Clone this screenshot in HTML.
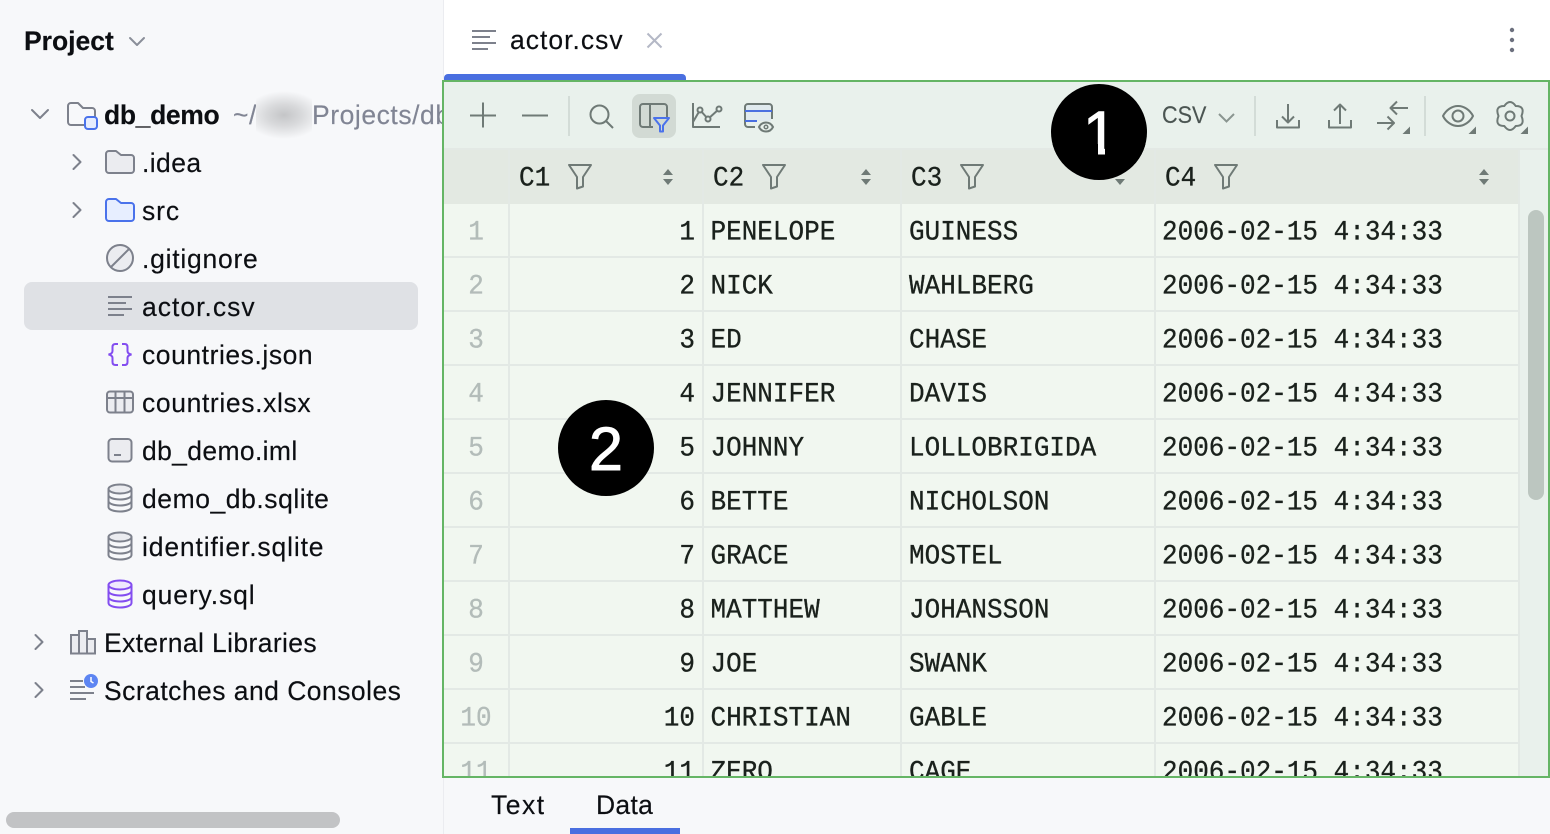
<!DOCTYPE html>
<html><head><meta charset="utf-8"><style>
html,body{margin:0;padding:0}
body{width:1550px;height:834px;position:relative;overflow:hidden;background:#fff;font-family:"Liberation Sans",sans-serif;color:#0c0e12}
.a{position:absolute}
.t{position:absolute;font-size:26.5px;line-height:48px;height:48px;white-space:nowrap;letter-spacing:.55px;-webkit-text-stroke:.15px currentColor}
svg{position:absolute;left:0;top:0;overflow:visible}
.r{position:absolute;left:0;width:1074px;height:54px;font:26px/54px "Liberation Mono",monospace;color:#1a211c;white-space:pre;-webkit-text-stroke:.3px currentColor}
.r span{position:absolute;top:1px;transform:scaleY(1.08)}
.n{left:0;width:64px;text-align:center;color:#b3bcb9}
.c1{left:66px;width:185px;text-align:right}
.c2{left:266.500px}.c3{left:465px}.c4{left:718px}
.h{position:absolute;top:151px;height:54px;font:26px/54px "Liberation Mono",monospace;color:#1a211c;-webkit-text-stroke:.3px currentColor;transform:scaleY(1.08)}
.badge{position:absolute;width:96px;height:96px;border-radius:50%;background:#000;color:#fff;font-size:61px;line-height:98px;text-align:center;overflow:hidden;-webkit-text-stroke:1px #fff}
</style></head><body>
<div class="a" style="left:0;top:0;width:443px;height:834px;background:#f7f8fa"></div>
<div class="a" style="left:443px;top:0;width:1px;height:834px;background:#ebecf0"></div>
<div class="a" style="left:24px;top:282px;width:394px;height:48px;border-radius:8px;background:#dfe1e5"></div>
<div class="a" style="left:6px;top:812px;width:334px;height:16px;border-radius:8px;background:#c2c3c5"></div>

<div class="t" style="left:24px;top:17px;font-weight:bold;letter-spacing:0">Project</div>
<div class="t" style="left:104px;top:91px;font-weight:bold;letter-spacing:-.35px">db_demo</div>
<div class="a" style="left:104px;top:91px;width:339px;height:48px;overflow:hidden"><div class="t" style="left:129px;top:0;color:#818594">~/</div><div class="t" style="left:208px;top:0;color:#818594">Projects/db_demo</div><div class="a" style="left:152px;top:0;width:56px;height:48px;background:radial-gradient(ellipse 70% 50% at 50% 50%,#c4c5c7 0%,#d8d9db 45%,#f7f8fa 100%)"></div></div>
<div class="t" style="left:142px;top:139px;letter-spacing:.4px">.idea</div>
<div class="t" style="left:142px;top:187px;letter-spacing:.9px">src</div>
<div class="t" style="left:142px;top:235px;letter-spacing:.75px">.gitignore</div>
<div class="t" style="left:142px;top:283px;letter-spacing:1px">actor.csv</div>
<div class="t" style="left:142px;top:331px">countries.json</div>
<div class="t" style="left:142px;top:379px;letter-spacing:.62px">countries.xlsx</div>
<div class="t" style="left:142px;top:427px;letter-spacing:.35px">db_demo.iml</div>
<div class="t" style="left:142px;top:475px">demo_db.sqlite</div>
<div class="t" style="left:142px;top:523px;letter-spacing:.85px">identifier.sqlite</div>
<div class="t" style="left:142px;top:571px;letter-spacing:.88px">query.sql</div>
<div class="t" style="left:104px;top:619px;letter-spacing:.38px">External Libraries</div>
<div class="t" style="left:104px;top:667px;letter-spacing:.46px">Scratches and Consoles</div>

<!-- editor -->
<div class="t" style="left:510px;top:16px;letter-spacing:1px">actor.csv</div>
<div class="a" style="left:444px;top:74px;width:242px;height:6px;background:#4a6fe0;border-radius:4px 4px 0 0"></div>

<!-- panel -->
<div class="a" style="left:444px;top:82px;width:1104px;height:68px;background:#e9f1ec"></div>
<div class="a" style="left:444px;top:148px;width:1104px;height:2px;background:#e3e9e5"></div>
<div class="a" style="left:1518px;top:150px;width:30px;height:628px;background:#e9f1ec"></div>
<div class="a" style="left:444px;top:150px;width:1074px;height:54px;background:#e3e9e2"></div>
<div class="a" style="left:444px;top:204px;width:1074px;height:574px;background:#f1f7f0"></div>
<div class="a" style="left:632px;top:94px;width:44px;height:44px;border-radius:8px;background:#d2dad4"></div>
<div class="a" style="left:1528px;top:210px;width:16px;height:290px;border-radius:8px;background:#bcc6c0"></div>

<div class="h" style="left:519px">C1</div>
<div class="h" style="left:713px">C2</div>
<div class="h" style="left:911px">C3</div>
<div class="h" style="left:1165px">C4</div>

<div class="a" style="left:444px;top:204px;width:1074px;height:572px;overflow:hidden">
<div class="r" style="top:0"><span class="n">1</span><span class="c1">1</span><span class="c2">PENELOPE</span><span class="c3">GUINESS</span><span class="c4">2006-02-15 4:34:33</span></div>
<div class="r" style="top:54px"><span class="n">2</span><span class="c1">2</span><span class="c2">NICK</span><span class="c3">WAHLBERG</span><span class="c4">2006-02-15 4:34:33</span></div>
<div class="r" style="top:108px"><span class="n">3</span><span class="c1">3</span><span class="c2">ED</span><span class="c3">CHASE</span><span class="c4">2006-02-15 4:34:33</span></div>
<div class="r" style="top:162px"><span class="n">4</span><span class="c1">4</span><span class="c2">JENNIFER</span><span class="c3">DAVIS</span><span class="c4">2006-02-15 4:34:33</span></div>
<div class="r" style="top:216px"><span class="n">5</span><span class="c1">5</span><span class="c2">JOHNNY</span><span class="c3">LOLLOBRIGIDA</span><span class="c4">2006-02-15 4:34:33</span></div>
<div class="r" style="top:270px"><span class="n">6</span><span class="c1">6</span><span class="c2">BETTE</span><span class="c3">NICHOLSON</span><span class="c4">2006-02-15 4:34:33</span></div>
<div class="r" style="top:324px"><span class="n">7</span><span class="c1">7</span><span class="c2">GRACE</span><span class="c3">MOSTEL</span><span class="c4">2006-02-15 4:34:33</span></div>
<div class="r" style="top:378px"><span class="n">8</span><span class="c1">8</span><span class="c2">MATTHEW</span><span class="c3">JOHANSSON</span><span class="c4">2006-02-15 4:34:33</span></div>
<div class="r" style="top:432px"><span class="n">9</span><span class="c1">9</span><span class="c2">JOE</span><span class="c3">SWANK</span><span class="c4">2006-02-15 4:34:33</span></div>
<div class="r" style="top:486px"><span class="n">10</span><span class="c1">10</span><span class="c2">CHRISTIAN</span><span class="c3">GABLE</span><span class="c4">2006-02-15 4:34:33</span></div>
<div class="r" style="top:540px"><span class="n">11</span><span class="c1">11</span><span class="c2">ZERO</span><span class="c3">CAGE</span><span class="c4">2006-02-15 4:34:33</span></div>
</div>

<svg width="1550" height="834" viewBox="0 0 1550 834" fill="none">
<!-- grid -->
<g stroke="#e3e9e5" stroke-width="2">
<path d="M509 150V778M703 150V778M901 150V778M1155 150V778"/>
<path d="M444 257H1518M444 311H1518M444 365H1518M444 419H1518M444 473H1518M444 527H1518M444 581H1518M444 635H1518M444 689H1518M444 743H1518"/>
</g>
<path d="M1519 150V778" stroke="#e3e9e5" stroke-width="2"/>

<!-- sidebar icons -->
<g stroke="#7d818c" stroke-width="2" stroke-linecap="round" stroke-linejoin="round">
<path d="M130 38l7 7 7-7" stroke="#8a8e99"/>
<path d="M32 110l8 8 8-8"/>
<path d="M73.500 155l7 7-7 7M73.500 203l7 7-7 7M35.500 635l7 7-7 7M35.500 683l7 7-7 7"/>
<path d="M84 125H71a3 3 0 0 1-3-3V106a3 3 0 0 1 3-3h7l5 5h9a3 3 0 0 1 3 3v5"/>
<path d="M109 151h7l5 4h10a3 3 0 0 1 3 3v12a3 3 0 0 1-3 3H109a3 3 0 0 1-3-3V154a3 3 0 0 1 3-3z" fill="#ebecf0"/>
<circle cx="120" cy="258" r="13" fill="#ebecf0"/><path d="M111 267l18-18"/>
</g>
<rect x="85" y="117" width="12" height="12" rx="3" fill="#e7edfd" stroke="#4a72eb" stroke-width="2"/>
<path d="M109 199h7l5 4h10a3 3 0 0 1 3 3v12a3 3 0 0 1-3 3H109a3 3 0 0 1-3-3V202a3 3 0 0 1 3-3z" fill="#e7eeff" stroke="#4a72eb" stroke-width="2" stroke-linejoin="round"/>
<g stroke="#7d818c" stroke-width="2">
<path d="M108 297h24M108 303h18M108 309h24M108 315h16"/>
<rect x="107" y="391.500" width="26" height="21" rx="3" fill="#ebecf0"/><path d="M107 398h26M115.500 392v20M124.500 392v20"/>
<rect x="108.500" y="439" width="23" height="22.500" rx="3.500" fill="#ebecf0"/><path d="M114 455h7"/>
<ellipse cx="120" cy="489" rx="11.500" ry="4.500" fill="#ebecf0"/><path d="M108.500 489v18c0 2.500 5 4.500 11.500 4.500s11.500-2 11.500-4.500V489M108.500 495c0 2.500 5 4.500 11.500 4.500s11.500-2 11.500-4.500M108.500 501c0 2.500 5 4.500 11.500 4.500s11.500-2 11.500-4.500"/>
<ellipse cx="120" cy="537" rx="11.500" ry="4.500" fill="#ebecf0"/><path d="M108.500 537v18c0 2.500 5 4.500 11.500 4.500s11.500-2 11.500-4.500V537M108.500 543c0 2.500 5 4.500 11.500 4.500s11.500-2 11.500-4.500M108.500 549c0 2.500 5 4.500 11.500 4.500s11.500-2 11.500-4.500"/>
<path d="M71 635h8v18.500h-8zM79 631h8v22.500h-8zM87 639h8v14.500h-8z" fill="#ebecf0"/>
<path d="M70 681h13M70 687h15M70 693h24M70 699h16"/>
</g>
<g stroke="#834df0" stroke-width="2" fill="none">
<path d="M118 344h-2.500c-2 0-3 1-3 3v4c0 2-1.500 3-4 3.500 2.500.5 4 1.500 4 3.500v4c0 2 1 3 3 3h2.500M122 344h2.500c2 0 3 1 3 3v4c0 2 1.500 3 4 3.500-2.500.5-4 1.500-4 3.500v4c0 2-1 3-3 3H122"/>
<ellipse cx="120" cy="585" rx="11.500" ry="4.500" fill="#efe9fd"/><path d="M108.500 585v18c0 2.500 5 4.500 11.500 4.500s11.500-2 11.500-4.500V585M108.500 591c0 2.500 5 4.500 11.500 4.500s11.500-2 11.500-4.500M108.500 597c0 2.500 5 4.500 11.500 4.500s11.500-2 11.500-4.500"/>
</g>
<circle cx="91" cy="681" r="7" fill="#5d85f2"/><path d="M91 677v4.500l2.500 1.500" stroke="#fff" stroke-width="1.500"/>

<!-- tab icons -->
<g stroke="#7d818c" stroke-width="2">
<path d="M472 31h24M472 37h18M472 43h24M472 49h16"/>
</g>
<path d="M647.500 33.500l14 14M661.500 33.500l-14 14" stroke="#b4b8c6" stroke-width="2"/>
<g fill="#6c707e"><circle cx="1512" cy="30" r="2.200"/><circle cx="1512" cy="40" r="2.200"/><circle cx="1512" cy="50" r="2.200"/></g>

<!-- toolbar -->
<path d="M746 105h25v16h-25z" fill="#e0eaee"/>
<g stroke="#6f7a76" stroke-width="2" stroke-linejoin="round">
<path d="M470 115.500h26M483 102.500v25M522 115.500h26"/>
<path d="M569 96v40M1255 96v40M1425 96v40" stroke="#d3dcd7"/>
<circle cx="599.500" cy="114.500" r="9"/><path d="M606 121l7 7"/>
<path d="M667 117v-10a3 3 0 0 0-3-3h-21a3 3 0 0 0-3 3v17a3 3 0 0 0 3 3h10M650 104v23"/>
<path d="M693 103v24h27M693 122l7-12 8 9 11-10"/>
<circle cx="700" cy="110" r="2.500" fill="#e9f1ec"/><circle cx="708" cy="119" r="2.500" fill="#e9f1ec"/><circle cx="719" cy="109" r="2.500" fill="#e9f1ec"/>
<path d="M755 127h-7a3 3 0 0 1-3-3V107a3 3 0 0 1 3-3h21a3 3 0 0 1 3 3v12"/>
<path d="M1288 104v19M1282 116.500l6 6 6-6M1277 120v7.500h22V120"/>
<path d="M1340 124v-19M1334 110.500l6-6 6 6M1329 120v7.500h22V120"/>
<path d="M1408 108h-17M1397 101.500l-6.500 6.500 6.500 6.500M1377 123h17M1387.500 116.500l6.500 6.500-6.500 6.500"/>
<path d="M1443 116c3-6 9-10 15-10s12 4 15 10c-3 6-9 10-15 10s-12-4-15-10z"/><circle cx="1458" cy="116" r="5.500"/>
<path d="M1504.250 106.040Q1510 98 1515.750 106.040Q1525.500 106 1521.500 116Q1525.500 126 1515.750 125.960Q1510 134 1504.250 125.960Q1494.500 126 1498.500 116Q1494.500 106 1504.250 106.040z"/><circle cx="1510" cy="116" r="4.500"/>
</g>
<path d="M745 111h27M745 121h12" stroke="#4a6fe0" stroke-width="2"/>
<path d="M759 127c1.500-3 4-4.500 7-4.500s5.500 1.500 7 4.500c-1.500 3-4 4.500-7 4.500s-5.500-1.500-7-4.500z" fill="#e9f1ec" stroke="#6f7a76" stroke-width="2"/><circle cx="766" cy="127" r="1.800" stroke="#6f7a76" stroke-width="1.500"/>
<path d="M654 118h15l-6 7.500v6h-3v-6z" fill="#d2dad4" stroke="#4a72eb" stroke-width="2" stroke-linejoin="round"/>
<path d="M1219 114l7.500 7.500 7.500-7.500" stroke="#8a9590" stroke-width="2"/>
<path d="M1410 134h-7.500l7.500-7.500zM1476 134h-7.500l7.500-7.500zM1528 134h-7.500l7.500-7.500z" fill="#6f7a76"/>

<!-- filters -->
<g stroke="#6f7a76" stroke-width="2" stroke-linejoin="round">
<path d="M569 165h22l-8 12v9.500l-6 2V177z"/>
<path d="M763 165h22l-8 12v9.500l-6 2V177z"/>
<path d="M961 165h22l-8 12v9.500l-6 2V177z"/>
<path d="M1215 165h22l-8 12v9.500l-6 2V177z"/>
</g>
<g fill="#6f7a76">
<path d="M668 169l5 6h-10zM668 185l5-6h-10z"/>
<path d="M866 169l5 6h-10zM866 185l5-6h-10z"/>
<path d="M1120 185l5-6h-10z"/>
<path d="M1484 169l5 6h-10zM1484 185l5-6h-10z"/>
</g>
</svg>
<div class="t" style="left:1162px;top:92px;font-size:24px;color:#4b5552;letter-spacing:0;transform:scaleX(.9);transform-origin:left center">CSV</div>

<!-- bottom -->
<div class="a" style="left:444px;top:778px;width:1106px;height:56px;background:#f7f8fa"></div>
<div class="t" style="left:491px;top:781px;letter-spacing:1.5px">Text</div>
<div class="t" style="left:596px;top:781px;letter-spacing:.3px">Data</div>
<div class="a" style="left:570px;top:828px;width:110px;height:6px;background:#4a6fe0"></div>

<!-- outline -->
<div class="a" style="left:442px;top:80px;width:1108px;height:698px;box-sizing:border-box;border:2px solid #65b565"></div>

<div class="badge" style="left:1051px;top:84px"><span style="position:relative;left:1px">1</span><div class="a" style="left:0;top:60px;width:46.500px;height:20px;background:#000"></div><div class="a" style="left:53.500px;top:60px;width:42px;height:20px;background:#000"></div></div>
<div class="badge" style="left:558px;top:400px">2</div>
</body></html>
